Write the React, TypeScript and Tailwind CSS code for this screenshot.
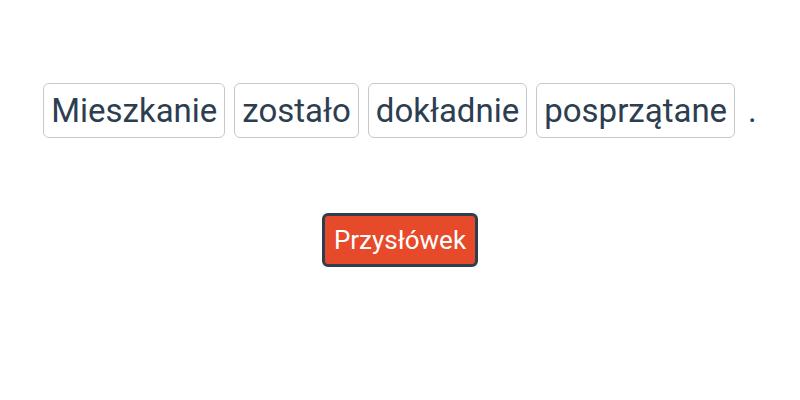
const words = ["Mieszkanie", "zostało", "dokładnie", "posprzątane"];

export default function App() {
  return (
    <div
      className="w-[800px] h-[400px] bg-white flex flex-col items-center text-[#2c3e50]"
      style={{ fontFamily: "Roboto, sans-serif" }}
    >
      <div className="mt-[83px] flex items-center gap-[9px]">
        {words.map((w) => (
          <span
            key={w}
            className="h-[55px] px-[7px] flex items-center rounded-md border border-[#c8c8c8] text-[33px] leading-none"
          >
            {w}
          </span>
        ))}
        <span className="text-[33px] leading-none ml-[4px]">.</span>
      </div>
      <button className="mt-[75px] h-[54px] px-[9px] rounded-md border-[3px] border-[#2c3e50] bg-[#e64a2b] text-white text-[26px] leading-none">
        Przysłówek
      </button>
    </div>
  );
}
